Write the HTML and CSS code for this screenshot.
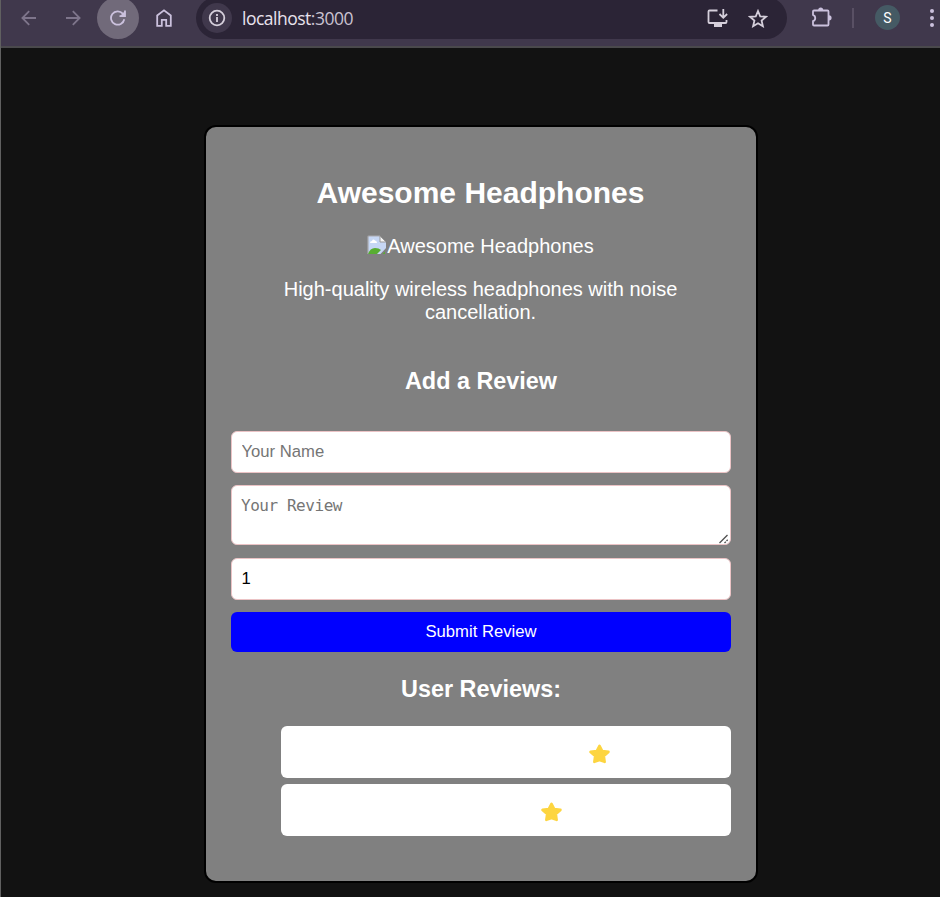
FILE: index.html
```html
<!DOCTYPE html>
<html lang="en">
<head>
<meta charset="utf-8">
<title>Awesome Headphones</title>
<link rel="stylesheet" href="styles.css">
</head>
<body>
<header class="toolbar">
  <span class="nav-btn back"><svg width="16" height="16" viewBox="0 0 16 16"><path d="M15 8H1.5M8.2 1.2 1.4 8l6.800 6.800"/></svg></span>
  <span class="nav-btn forward"><svg width="16" height="16" viewBox="0 0 16 16"><path d="M1 8h13.500M7.800 1.200 14.600 8 7.800 14.800"/></svg></span>
  <span class="nav-btn reload"><svg width="16" height="16" viewBox="0 0 16 16"><path d="M14.300 9.300a6.700 6.700 0 1 1-1.500-5.700l1.700 1.800"/><path d="M15 .5v5.700H9.500"/><path class="solid" d="M15 1v5H10z"/></svg></span>
  <span class="nav-btn home"><svg width="16" height="18" viewBox="0 0 16 18"><path d="M1.200 6.500 8 1.300l6.800 5.200v10.300h-4.600v-6H5.800v6H1.200z"/></svg></span>
  <div class="address">
    <span class="info"><svg width="18" height="18" viewBox="0 0 18 18"><circle cx="9" cy="9" r="7.300"/><path d="M9 8v5M9 5v2"/></svg></span>
    <span class="url">localhost<span class="port">:3000</span></span>
    <svg class="install" width="21" height="19" viewBox="0 0 21 19"><path d="M10.500 1.500H2.500q-1 0-1 1v10.500q0 1 1 1h16q1 0 1-1v-2M16.300 0v8.500M12.500 5l3.800 3.800L20.100 5"/><path class="solid" d="M7 14h8v4H7z"/></svg>
    <svg class="bookmark" width="20" height="19" viewBox="0 0 20 19"><path d="m10 2 2.200 5.300 5.800.5-4.400 3.800 1.300 5.600-4.900-3-4.900 3 1.300-5.600L2 7.800l5.800-.5z"/></svg>
  </div>
  <svg class="extensions" width="22" height="22" viewBox="0 0 22 22"><path d="M3 4.500h13.500q1 0 1 1v13q0 1-1 1H3q-1 0-1-1v-3.300a3.400 3.400 0 0 0 0-6.400V5.500q0-1 1-1z"/><path class="solid" d="M7.200 4a2.500 2.500 0 0 1 5 0zM18 9.200a2.600 2.600 0 0 1 0 5.200z"/></svg>
  <span class="divider"></span>
  <span class="avatar">S</span>
  <svg class="more" width="4" height="18" viewBox="0 0 4 18"><circle cx="2" cy="2" r="2"/><circle cx="2" cy="9" r="2"/><circle cx="2" cy="16" r="2"/></svg>
</header>
<main>
  <section class="card">
    <h1>Awesome Headphones</h1>
    <div class="picture"><svg width="20" height="20" viewBox="0 0 20 20"><path d="M1 1h12l6 6v12H1z" fill="#c6d7f5"/><path d="M1 19V2q0-1 1-1h11" fill="none" stroke="#a9aaae" stroke-width="1.200"/><path d="M3 8q0-2 2-2 1-2.500 3-.5 2 0 2 2.500z" fill="#fff"/><path d="M1 19q2-6 7-6 4 0 6 2l-4 4z" fill="#58ad32"/><path d="M13 1v6h6z" fill="#f5f5f5" stroke="#999" stroke-width="1"/><path d="M12.500 20 20 12v8z" fill="gray"/><path d="M15.500 19 18 16.500V19z" fill="#58ad32"/></svg><span>Awesome Headphones</span></div>
    <p>High-quality wireless headphones with noise cancellation.</p>
    <h2 class="add">Add a Review</h2>
    <form>
      <input type="text" placeholder="Your Name">
      <div class="area"><textarea placeholder="Your Review"></textarea><svg width="10" height="10" viewBox="0 0 10 10"><path d="M.5 9 8.500 1M5.500 9l1.300-1.300M7.500 7l1.200-1.200" /></svg></div>
      <input type="text" value="1">
      <button type="button">Submit Review</button>
    </form>
    <h2 class="reviews-title">User Reviews:</h2>
    <ul>
      <li class="first"><svg width="21" height="20" viewBox="0 0 20 19"><path d="m10 1.700 2.600 5 5.900.8-4.400 3.800.8 5.700-4.900-1.800-4.900 1.800.8-5.700-4.400-3.800 5.900-.8z"/></svg></li>
      <li class="second"><svg width="21" height="20" viewBox="0 0 20 19"><path d="m10 1.700 2.600 5 5.900.8-4.400 3.800.8 5.700-4.900-1.800-4.900 1.800.8-5.700-4.400-3.800 5.900-.8z"/></svg></li>
    </ul>
  </section>
</main>
</body>
</html>
```

FILE: styles.css
```css
* { box-sizing: border-box; }
body {
  margin: 0;
  height: 897px;
  overflow: hidden;
  background: #121212;
  border-left: 1px solid #606060;
  color: #fff;
  font: 20px/23px "Liberation Sans", Arial, sans-serif;
}
svg { display: block; flex: none; }
.toolbar {
  display: flex;
  align-items: flex-start;
  height: 48px;
  background: #40384c;
  border-bottom: 2px solid #4a494c;
  overflow: hidden;
}
.toolbar svg { fill: none; stroke: #cbc1dd; stroke-width: 1.800; }
.toolbar .solid { fill: #cbc1dd; stroke: none; }
.nav-btn {
  flex: none;
  display: flex;
  align-items: center;
  justify-content: center;
  width: 42px;
  height: 42px;
  margin-top: -3px;
  border-radius: 50%;
}
.back { margin-left: 7px; }
.forward { margin-left: 2px; }
.reload { margin-left: 3px; background: #716a7a; }
.home { margin-left: 4px; }
.nav-btn.back svg, .nav-btn.forward svg { stroke: #7e758b; }
.address {
  flex: none;
  display: flex;
  align-items: center;
  width: 591px;
  height: 42px;
  margin: -3px 0 0 11px;
  padding: 0 19px 0 6px;
  border-radius: 21px;
  background: #2b2436;
}
.info {
  display: flex;
  align-items: center;
  justify-content: center;
  width: 30px;
  height: 30px;
  border-radius: 50%;
  background: #40384c;
}
.toolbar .info svg, .toolbar .bookmark, .toolbar .install { stroke: #d5cfdb; }
.toolbar .install .solid { fill: #d5cfdb; }
.url {
  margin-left: 10px;
  font: 17.500px/24px "Open Sans", "Noto Sans", sans-serif;
  letter-spacing: -0.500px;
  color: #e8e2ed;
}
.port { color: #c9c2d1; }
.install { margin-left: auto; }
.bookmark { margin: 0 0 0 20px; }
.extensions { margin: 6px 0 0 24px; }
.divider { width: 2px; height: 20px; margin: 8px 0 0 19px; background: #595064; }
.avatar {
  flex: none;
  width: 25px;
  height: 25px;
  margin: 5px 0 0 21px;
  border-radius: 50%;
  background: #455a64;
  font: 14px/26px Roboto, sans-serif;
  text-align: center;
}
.more { flex: none; margin: 9px 0 0 30px; }
.toolbar .more { fill: #cbc1dd; stroke: none; }

.card {
  width: 554px;
  height: 758px;
  margin: 77px auto 0 203px;
  padding: 48px 25px 0;
  border: 2px solid #000;
  border-radius: 12px;
  background: #808080;
  text-align: center;
}
h1 { margin: 0 1px 0 0; font-size: 30px; line-height: 36px; }
.picture {
  display: flex;
  justify-content: center;
  margin: 24px 1px 0 0;
}
p { margin: 20px 50px 0 49px; }
h2 { margin: 0; font-size: 23.400px; line-height: 28px; }
.add { margin-top: 43px; }
form {
  display: flex;
  flex-direction: column;
  margin-top: 36px;
}
input, textarea {
  display: block;
  width: 100%;
  height: 42px;
  margin: 0 0 12px;
  padding: 10px 9.500px;
  border: 1px solid #ebc3c5;
  border-radius: 6px;
  outline: none;
  background: #fff;
  color: #000;
  font: 16.670px/20px "Liberation Sans", Arial, sans-serif;
}
.area { position: relative; margin-bottom: 13px; }
textarea {
  height: 60px;
  margin: 0;
  padding: 10px 9px;
  resize: none;
  overflow: hidden;
  font: 16px/20px "DejaVu Sans Mono", monospace;
  letter-spacing: -0.450px;
}
.area svg { position: absolute; right: 2px; bottom: 1px; fill: none; stroke: #505050; stroke-width: 1.300; }
::placeholder { color: #757575; opacity: 1; }
button {
  height: 40px;
  padding: 0;
  border: 0;
  border-radius: 6px;
  background: #00f;
  color: #fff;
  font: 16.670px/38px "Liberation Sans", Arial, sans-serif;
}
.reviews-title { margin-top: 23px; }
ul { margin: 23px 0 0; padding: 0 0 0 50px; list-style: none; }
li {
  display: flex;
  align-items: center;
  height: 52px;
  margin-bottom: 6px;
  padding-top: 4px;
  border-radius: 6px;
  background: #fff;
}
li svg { fill: #fdd540; stroke: #fdd540; stroke-width: 2.500; stroke-linejoin: round; }
.first { padding-left: 308px; }
.second { padding-left: 260px; }
```
